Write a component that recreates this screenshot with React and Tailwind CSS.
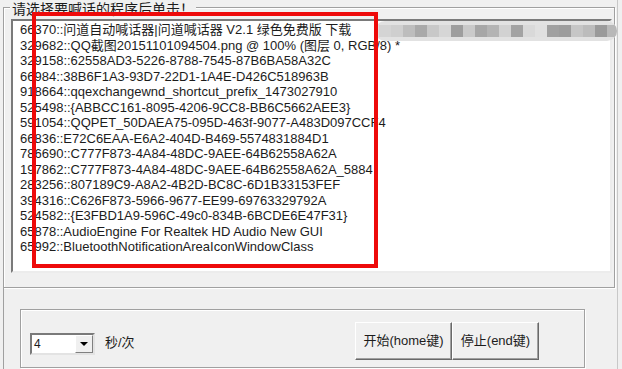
import React from "react";

const lines = [
  "66370::问道自动喊话器|问道喊话器 V2.1 绿色免费版 下载",
  "329682::QQ截图20151101094504.png @ 100% (图层 0, RGB/8) *",
  "329158::62558AD3-5226-8788-7545-87B6BA58A32C",
  "66984::38B6F1A3-93D7-22D1-1A4E-D426C518963B",
  "918664::qqexchangewnd_shortcut_prefix_1473027910",
  "525498::{ABBCC161-8095-4206-9CC8-BB6C5662AEE3}",
  "591054::QQPET_50DAEA75-095D-463f-9077-A483D097CCF4",
  "66836::E72C6EAA-E6A2-404D-B469-5574831884D1",
  "786690::C777F873-4A84-48DC-9AEE-64B62558A62A",
  "197862::C777F873-4A84-48DC-9AEE-64B62558A62A_5884",
  "283256::807189C9-A8A2-4B2D-BC8C-6D1B33153FEF",
  "394316::C626F873-5966-9677-EE99-69763329792A",
  "524582::{E3FBD1A9-596C-49c0-834B-6BCDE6E47F31}",
  "65878::AudioEngine For Realtek HD Audio New GUI",
  "65992::BluetoothNotificationAreaIconWindowClass",
];

const blocks = [
  "bg-[#d4d4d4]",
  "bg-[#cfcfcf]",
  "bg-[#bdbdbd]",
  "bg-[#a9a9a9]",
  "bg-[#c8c8c8]",
  "bg-[#d6d6d6]",
  "bg-[#9e9e9e]",
  "bg-[#cacaca]",
  "bg-[#a7a7a7]",
  "bg-[#b4b4b4]",
  "bg-[#d2d2d2]",
  "bg-[#a3a3a3]",
  "bg-[#d9d9d9]",
  "bg-[#e0e0e0]",
  "bg-[#a0a0a0]",
  "bg-[#9c9c9c]",
  "bg-[#c6c6c6]",
  "bg-[#bcbcbc]",
  "bg-[#9a9a9a]",
  "bg-[#b8b8b8]",
];

export default function App() {
  return (
    <div className="relative w-[622px] h-[369px] overflow-hidden bg-[#f0f0f0] font-['Liberation_Sans','Noto_Sans_CJK_SC',sans-serif] text-[13px] text-[#1c1c1c]">
      <div className="w-[618px] h-[369px] border-r border-[#c8c8c8]">
        {/* top group box */}
        <div className="pt-[7px] pl-[3px]">
          <div className="relative w-[612px] h-[281px] border border-[#a0a0a0] shadow-[inset_1px_1px_0_#fff,1px_1px_0_#fff]">
            <span className="absolute left-[6px] top-[-7px] bg-[#f0f0f0] px-[2px] text-[14px] leading-[17px] whitespace-nowrap">
              请选择要喊话的程序后单击！
            </span>
            <div className="ml-[7px] mt-[11px] w-[601px] h-[254px] bg-white border-2 border-t-[#7a7a7a] border-l-[#7a7a7a] border-r-[#ececec] border-b-[#ececec] pl-[7px] pt-[1px] overflow-hidden">
              {lines.map((l, i) => (
                <div key={i} className="leading-[15.5px] whitespace-nowrap">
                  {l}
                </div>
              ))}
            </div>
          </div>
        </div>

        {/* bottom area */}
        <div className="ml-[3px] h-[81px] border-l border-[#a0a0a0] pl-[16px] pt-[21px]">
          <div className="w-[565px] h-[59px] border border-[#a0a0a0] shadow-[inset_1px_1px_0_#fff,1px_1px_0_#fff] flex items-start">
            <div className="ml-[9px] mt-[23px] w-[65px] h-[22px] flex bg-white border-2 border-t-[#7a7a7a] border-l-[#7a7a7a] border-r-[#e3e3e3] border-b-[#e3e3e3]">
              <span className="flex-1 pl-[2px] text-[12px] leading-[18px]">4</span>
              <div className="w-[18px] h-[18px] bg-[#f0f0f0] border border-t-white border-l-white border-r-[#808080] border-b-[#808080] flex items-center justify-center">
                <div className="w-0 h-0 border-l-[4px] border-r-[4px] border-t-[4px] border-l-transparent border-r-transparent border-t-black" />
              </div>
            </div>
            <span className="ml-[10px] mt-[24px] leading-[17px] whitespace-nowrap">秒/次</span>
            <div className="ml-auto mr-[45px] mt-[12px] flex">
              <button className="w-[97px] h-[38px] bg-[#f0f0f0] border border-t-white border-l-white border-r-[#696969] border-b-[#696969] shadow-[inset_-1px_-1px_0_#a0a0a0] text-[13px] whitespace-nowrap">
                开始(home键)
              </button>
              <button className="w-[87px] h-[38px] bg-[#f0f0f0] border border-t-white border-l-white border-r-[#696969] border-b-[#696969] shadow-[inset_-1px_-1px_0_#a0a0a0] text-[13px] whitespace-nowrap">
                停止(end键)
              </button>
            </div>
          </div>
        </div>
      </div>

      {/* pixelated privacy mosaic */}
      <div className="absolute left-[375px] top-[21px] w-[242px] h-[20px] rounded-full bg-[#e2e2e2] flex items-center overflow-hidden px-[4px] blur-[0.6px]">
        {blocks.map((c, i) => (
          <div key={i} className={`w-[12px] h-[12px] shrink-0 ${c}`} />
        ))}
      </div>

      {/* red highlight rectangle */}
      <div className="absolute left-[32px] top-[12px] w-[346px] h-[256px] border-[4px] border-[#ee0a0a]" />
    </div>
  );
}
